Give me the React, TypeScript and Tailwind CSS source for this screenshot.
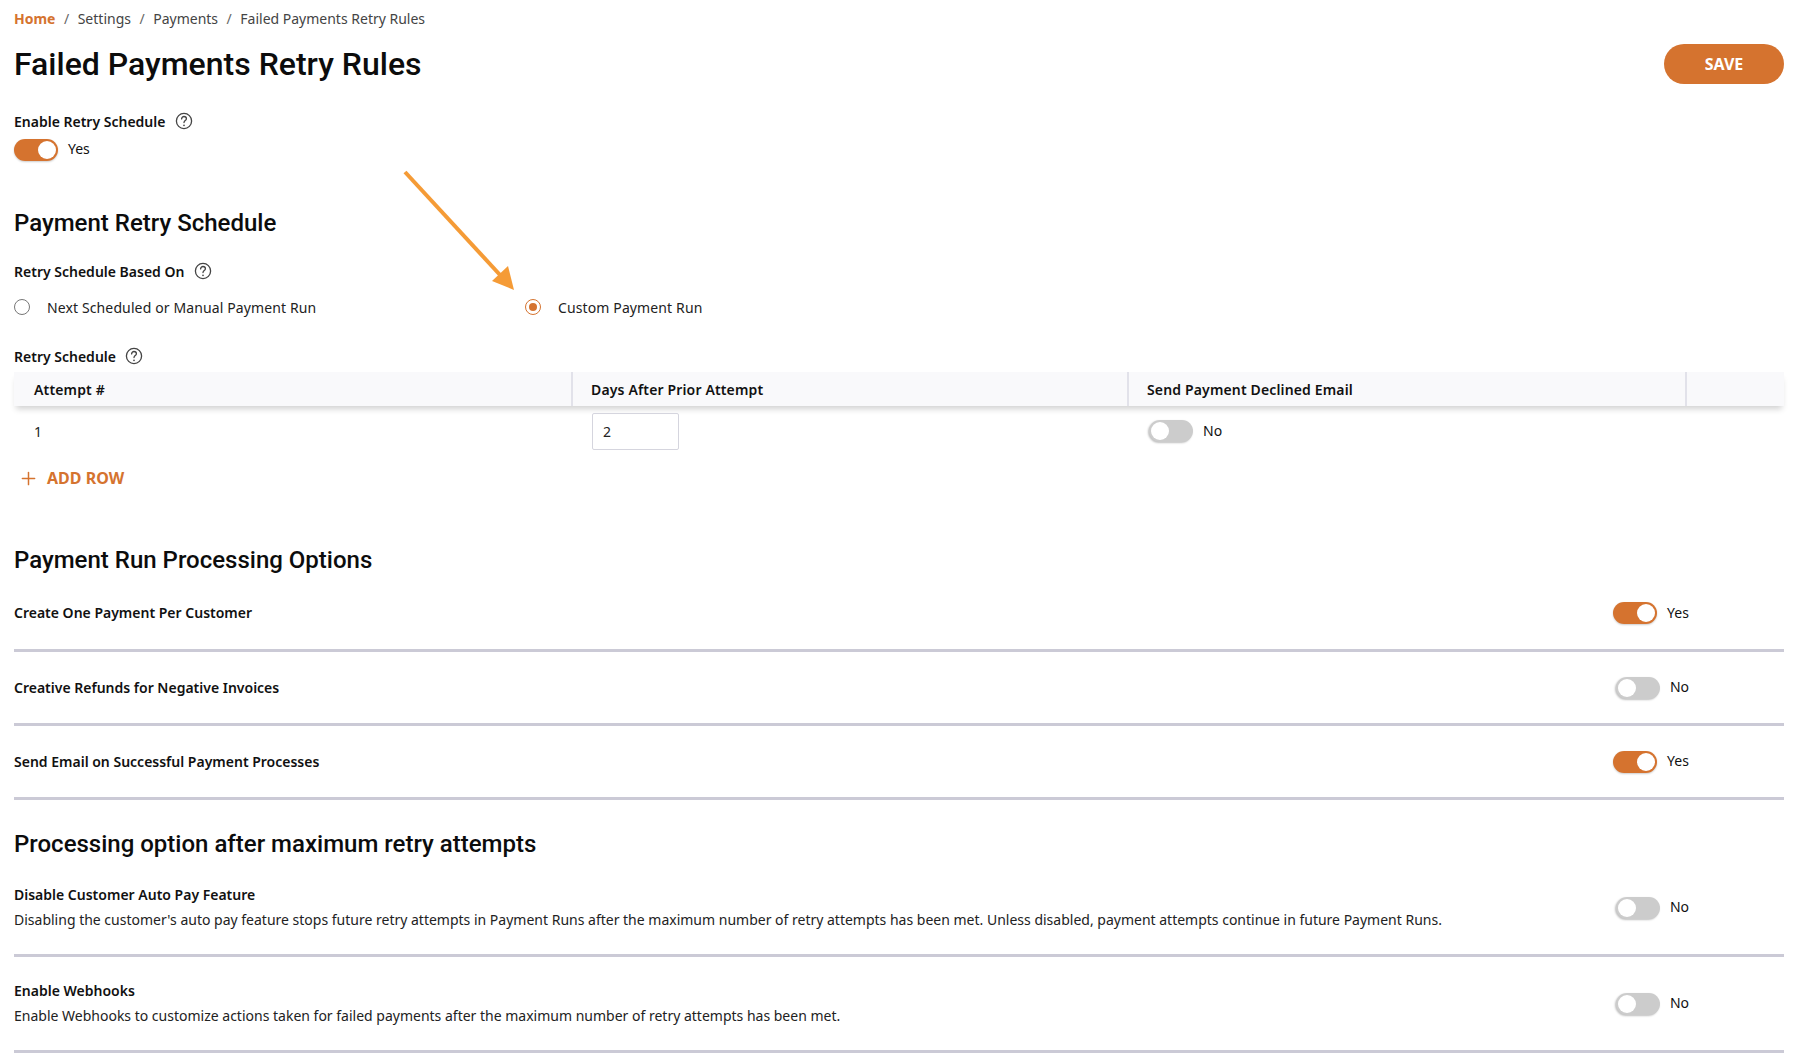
import { Plus } from 'lucide-react';

const body = "font-['Noto_Sans',sans-serif]";
const heading = "font-['Roboto',sans-serif]";

function Help() {
  return (
    <svg width="18" height="18" viewBox="0 0 18 18" fill="none" className="shrink-0 text-[#444]">
      <circle cx="9" cy="9" r="7.6" stroke="currentColor" strokeWidth="1.3" />
      <path d="M6.6 6.9c0-1.5 1.1-2.4 2.4-2.4s2.4.9 2.4 2.2c0 1.8-2.4 2-2.4 3.9" stroke="currentColor" strokeWidth="1.3" strokeLinecap="round" />
      <circle cx="9" cy="13.3" r=".85" fill="currentColor" />
    </svg>
  );
}

function Toggle({ on }: { on: boolean }) {
  return (
    <div className="flex items-center gap-[10px]">
      <div
        className={
          on
            ? 'flex h-[22px] w-[44px] items-center justify-end rounded-full bg-[#d5732f] px-[2px] shadow-[0_1px_2px_rgba(0,0,0,0.2)]'
            : 'flex h-[22px] w-[44px] items-center justify-start rounded-full bg-[#cccccc] px-[2px] shadow-[-1px_1px_2px_rgba(0,0,0,0.25)]'
        }
      >
        <div className="h-[18px] w-[18px] rounded-full bg-white" />
      </div>
      <span className="mb-[2px] text-[14px] text-[#111]">{on ? 'Yes' : 'No'}</span>
    </div>
  );
}

function Radio({ on, label }: { on: boolean; label: string }) {
  return (
    <div className="flex items-center gap-[17px]">
      <div className={on ? 'flex h-[16px] w-[16px] items-center justify-center rounded-full border-[1.5px] border-[#d5732f]' : 'h-[16px] w-[16px] rounded-full border-[1.5px] border-[#777]'}>
        {on && <div className="h-[8px] w-[8px] rounded-full bg-[#d5732f]" />}
      </div>
      <span className="text-[14px] tracking-[0.12px] text-[#222]">{label}</span>
    </div>
  );
}

function OptionRow({ title, desc, on, height }: { title: string; desc?: string; on: boolean; height: string }) {
  return (
    <div className={`flex items-center justify-between border-b-[3px] border-[#cbcad6] ${height}`}>
      <div>
        <div className="text-[14px] font-semibold leading-[20px] text-[#111]">{title}</div>
        {desc && <div className="mt-[5px] text-[14px] leading-[20px] text-[#222]">{desc}</div>}
      </div>
      <div className={on ? 'flex w-[266px] justify-center' : 'flex w-[266px] justify-center pl-[3px]'}>
        <Toggle on={on} />
      </div>
    </div>
  );
}

export default function App() {
  return (
    <div className={`relative h-[1058px] overflow-hidden bg-white pl-[14px] pr-[30px] ${body}`}>
      {/* annotation arrow on top of the screenshot */}
      <svg className="pointer-events-none absolute left-[400px] top-[168px]" width="120" height="128" viewBox="0 0 120 128" fill="none">
        <path d="M5 4 L101 108" stroke="#f59b36" strokeWidth="4" />
        <path d="M114 122 L92 113 L108 98 Z" fill="#f59b36" />
      </svg>

      <div className="flex h-[36px] items-center text-[14px] text-[#444]">
        <span className="font-bold text-[#d5732f]">Home</span>
        <span className="mx-[8.5px] text-[#666]">/</span>
        <span>Settings</span>
        <span className="mx-[8.5px] text-[#666]">/</span>
        <span>Payments</span>
        <span className="mx-[8.5px] text-[#666]">/</span>
        <span>Failed Payments Retry Rules</span>
      </div>

      <div className="mt-[2px] flex h-[52px] items-center justify-between">
        <h1 className={`text-[32px] font-medium leading-none text-[#0c0c0c] ${heading}`}>Failed Payments Retry Rules</h1>
        <button className="h-[40px] w-[120px] rounded-full bg-[#d5732f] text-[16px] font-bold text-white">SAVE</button>
      </div>

      <div className="mt-[19px] flex h-[24px] items-center gap-[10px]">
        <span className="text-[14px] font-semibold text-[#111]">Enable Retry Schedule</span>
        <Help />
      </div>
      <div className="mt-[5px]">
        <Toggle on />
      </div>

      <h2 className={`mt-[48px] text-[24px] font-medium leading-[28px] text-[#0c0c0c] ${heading}`}>Payment Retry Schedule</h2>

      <div className="mt-[22px] flex h-[24px] items-center gap-[10px]">
        <span className="text-[14px] font-semibold text-[#111]">Retry Schedule Based On</span>
        <Help />
      </div>
      <div className="mt-[12px] flex h-[24px] items-center">
        <div className="w-[511px]">
          <Radio on={false} label="Next Scheduled or Manual Payment Run" />
        </div>
        <Radio on label="Custom Payment Run" />
      </div>

      <div className="mt-[25px] flex h-[24px] items-center gap-[9px]">
        <span className="text-[14px] font-semibold text-[#111]">Retry Schedule</span>
        <Help />
      </div>

      <div className="mt-[4px] grid h-[34px] grid-cols-[559px_556px_558px_1fr] items-stretch bg-[#f9f9fb] text-[14px] font-semibold tracking-[0.15px] text-[#111] shadow-[0_5px_6px_-2px_rgba(0,0,0,0.18)]">
        <div className="flex items-center border-r-2 border-[#e2e2ea] pl-[20px]">Attempt #</div>
        <div className="flex items-center border-r-2 border-[#e2e2ea] pl-[18px]">Days After Prior Attempt</div>
        <div className="flex items-center border-r-2 border-[#e2e2ea] pl-[18px]">Send Payment Declined Email</div>
        <div />
      </div>
      <div className="grid h-[50px] grid-cols-[559px_556px_558px_1fr] items-center text-[14px] text-[#222]">
        <div className="pl-[20px]">1</div>
        <div className="pl-[19px]">
          <div className="flex h-[37px] w-[87px] items-center rounded-[2px] border border-[#d5d5de] pl-[10px]">2</div>
        </div>
        <div className="pl-[20px]">
          <Toggle on={false} />
        </div>
        <div />
      </div>

      <div className="mt-[9px] flex h-[26px] items-center gap-[8px] pl-[4px] text-[16px] font-bold text-[#d5732f]">
        <Plus size={21} strokeWidth={1.7} />
        <span>ADD ROW</span>
      </div>

      <h2 className={`mt-[55px] text-[24px] font-medium leading-[28px] text-[#0c0c0c] ${heading}`}>Payment Run Processing Options</h2>

      <div className="mt-[3px]">
        <OptionRow title="Create One Payment Per Customer" on height="h-[75px]" />
        <OptionRow title="Creative Refunds for Negative Invoices" on={false} height="h-[74px]" />
        <OptionRow title="Send Email on Successful Payment Processes" on height="h-[74px]" />
      </div>

      <h2 className={`mt-[30px] text-[24px] font-medium leading-[28px] text-[#0c0c0c] ${heading}`}>Processing option after maximum retry attempts</h2>

      <div className="mt-[3px]">
        <OptionRow
          title="Disable Customer Auto Pay Feature"
          desc="Disabling the customer's auto pay feature stops future retry attempts in Payment Runs after the maximum number of retry attempts has been met. Unless disabled, payment attempts continue in future Payment Runs."
          on={false}
          height="h-[96px]"
        />
        <OptionRow
          title="Enable Webhooks"
          desc="Enable Webhooks to customize actions taken for failed payments after the maximum number of retry attempts has been met."
          on={false}
          height="h-[96px]"
        />
      </div>
    </div>
  );
}
